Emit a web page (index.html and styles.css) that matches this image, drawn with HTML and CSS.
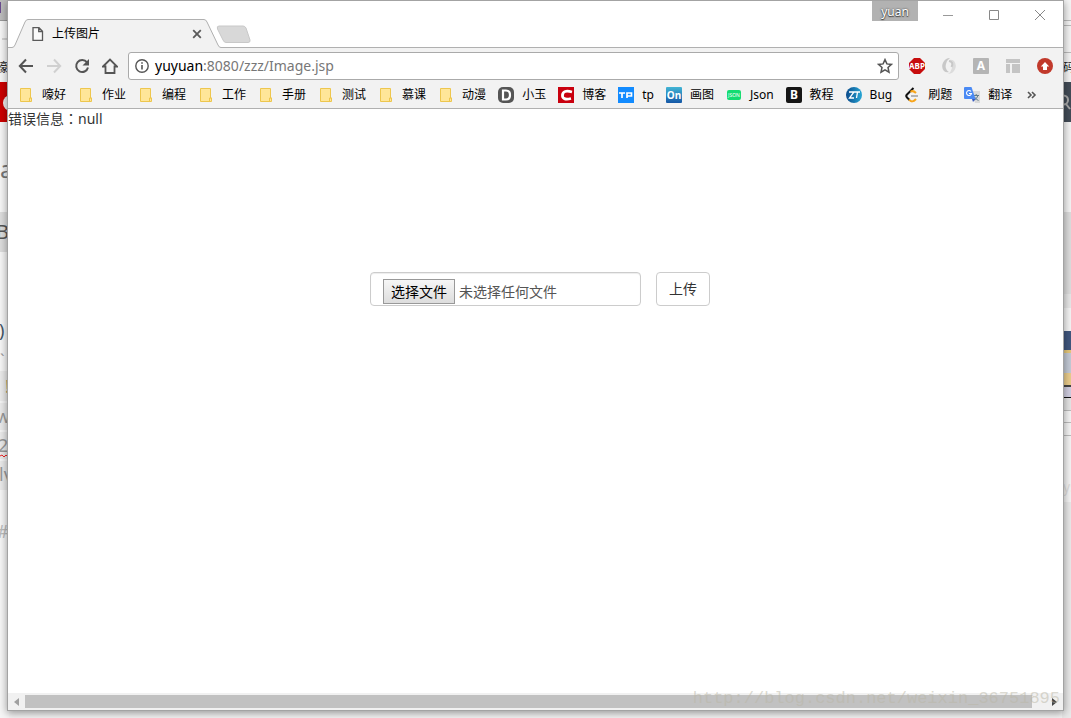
FILE: index.html
```html
<!DOCTYPE html>
<html lang="zh-CN">
<head>
<meta charset="utf-8">
<title>上传图片</title>
<link rel="stylesheet" href="styles.css">
</head>
<body>
<svg class="behind behind-left" width="9" height="718" aria-hidden="true">
  <rect width="9" height="718" fill="#f6f6f6"/>
  <rect width="9" height="20" fill="#bcbcbc"/>
  <rect y="2" width="1" height="11" fill="#6b4d8f"/>
  <rect y="20" width="9" height="1" fill="#999"/>
  <rect y="38" x="2" width="6" height="2" fill="#d4d4d4"/>
  <text x="-4" y="72" font-size="12" fill="#222">嚎</text>
  <rect y="82" width="9" height="40" fill="#c00"/>
  <circle cx="11" cy="103" r="8" fill="#eee"/>
  <text x="0" y="178" font-size="24" fill="#777">a</text>
  <rect y="212" width="9" height="40" fill="#ddd"/>
  <text x="-4" y="239" font-size="20" fill="#555">B</text>
  <text x="-1" y="337" font-size="18" fill="#456">)</text>
  <text x="0" y="366" font-size="16" fill="#999">`</text>
  <rect y="371" width="9" height="119" fill="#eaeaea"/>
  <text x="5" y="393" font-size="18" fill="#a89458">!</text>
  <path d="M0 402h9M0 431h9M0 460h9" stroke="#f5f5f5" stroke-width="2"/>
  <text x="-4" y="423" font-size="18" fill="#999">w</text>
  <text x="-2" y="452" font-size="18" fill="#999">2</text>
  <path d="M0 456l2-1 2 2 2-2 2 2" stroke="#e22" fill="none"/>
  <text x="-1" y="481" font-size="18" fill="#999">lv</text>
  <text x="-3" y="538" font-size="18" fill="#bbb">#</text>
</svg>
<svg class="behind behind-right" width="9" height="718" aria-hidden="true">
  <rect width="9" height="718" fill="#f4f4f4"/>
  <path d="M0 20.500h9M0 25.500h9M0 52.500h9" stroke="#bbb"/>
  <text x="1" y="72" font-size="12" fill="#222">码</text>
  <rect y="82" width="9" height="40" fill="#434c57"/>
  <circle cx="1.500" cy="100" r="4.500" fill="none" stroke="#aaa" stroke-width="2"/>
  <path d="M4 104l4 5" stroke="#aaa" stroke-width="2"/>
  <rect y="212" width="9" height="82" fill="#ddd"/>
  <rect y="294" width="9" height="14" fill="#e7e7e7"/>
  <rect y="331" width="9" height="19" fill="#41577e"/>
  <rect y="350" width="9" height="3" fill="#e5c87b"/>
  <rect y="353" width="9" height="20" fill="#c3cad5"/>
  <rect y="373" width="9" height="12" fill="#eacd8c"/>
  <rect y="385" width="9" height="2" fill="#444"/>
  <rect y="387" width="9" height="10" fill="#d0cee0"/>
  <rect y="397" width="9" height="1" fill="#111"/>
  <rect y="398" width="9" height="12" fill="#e5e5e5"/>
  <path d="M0 410.500h9M0 422.500h9M0 435.500h9" stroke="#bbb"/>
  <text x="1" y="492" font-size="14" fill="#ddd">ys</text>
  <rect y="502" width="9" height="216" fill="#e9e9e9"/>
</svg>

<div class="window">
  <header class="titlebar">
    <div class="tab">
      <svg class="tab-shape" width="213" height="29" viewBox="0 0 213 29" aria-hidden="true"><path d="M0 28.500H4Q6 28.500 7 26L17 3Q18 .5 20 .5H196Q198 .5 199 3L210 26Q211 28.500 213 28.500V29H0z" fill="#f2f2f2"/><path d="M0 28.500H4Q6 28.500 7 26L17 3Q18 .5 20 .5H196Q198 .5 199 3L210 26Q211 28.500 213 28.500" fill="none" stroke="#b0b0b0"/></svg>
      <svg class="tab-page" width="12" height="14" viewBox="0 0 12 14" aria-hidden="true"><path d="M1 .7H7L10.500 4.200V13.300H1zM6.700 1V4.500H10.500" fill="#fafafa" stroke="#5a5a5a" stroke-width="1.300"/></svg>
      <span class="tab-title">上传图片</span>
      <button class="tab-close" aria-label="关闭标签页"><svg width="10" height="10" viewBox="0 0 10 10"><path d="M1.200 1.200l7.600 7.600M8.800 1.200L1.200 8.800" stroke="#5a5a5a" stroke-width="1.800"/></svg></button>
    </div>
    <button class="new-tab" aria-label="新标签页"><svg width="36" height="19" viewBox="0 0 36 19"><path d="M3 1H27Q29 1 30 3L34 15Q34.500 17.500 32 17.500H10Q8 17.500 7 15L1.500 4Q.5 1 3 1z" fill="#d8d8d8" stroke="#c8c8c8"/></svg></button>
    <div class="window-controls">
      <button class="profile">yuan</button>
      <div class="control-group">
        <button aria-label="最小化"><svg width="12" height="12"><path d="M1 6.500h10" stroke="#999"/></svg></button>
        <button aria-label="最大化"><svg width="12" height="12"><path d="M1.500 1.500h9v9h-9z" fill="none" stroke="#888"/></svg></button>
        <button aria-label="关闭"><svg width="12" height="12"><path d="M1 1l10 10M11 1L1 11" stroke="#888"/></svg></button>
      </div>
    </div>
  </header>

  <div class="toolbar">
    <nav class="nav-buttons">
      <button aria-label="后退"><svg width="16" height="16"><path d="M15 8H2M8 1.500L1.800 8 8 14.500" fill="none" stroke="#555" stroke-width="2"/></svg></button>
      <button aria-label="前进"><svg width="16" height="16"><path d="M1 8h13M8 1.500L14.200 8 8 14.500" fill="none" stroke="#d0d0d0" stroke-width="2"/></svg></button>
      <button aria-label="重新加载"><svg width="16" height="16"><path d="M13 4.400A6 6 0 1 0 14 9.500" fill="none" stroke="#555" stroke-width="2"/><path d="M15 1v6.500H8.500z" fill="#555"/></svg></button>
      <button aria-label="主页"><svg width="16" height="16"><path d="M1 8.500L8 1.500l7 7h-2.500V15h-9V8.500z" fill="none" stroke="#555" stroke-width="1.800"/></svg></button>
    </nav>
    <div class="omnibox">
      <svg width="14" height="14" viewBox="0 0 14 14" aria-hidden="true"><circle cx="7" cy="7" r="6.200" fill="none" stroke="#555" stroke-width="1.400"/><path d="M7 6v4.500M7 3.200v1.600" stroke="#555" stroke-width="1.600"/></svg>
      <div class="url" role="textbox" aria-label="网址" tabindex="0"><span class="host">yuyuan</span>:8080/zzz/Image.jsp</div>
      <button aria-label="添加书签"><svg width="16" height="16" viewBox="0 0 16 16"><path d="M8 1.600l1.900 4.300 4.600.5-3.500 3.100 1 4.700L8 11.800l-4 2.400 1-4.700-3.500-3.100 4.600-.5z" fill="none" stroke="#555" stroke-width="1.500"/></svg></button>
    </div>
    <div class="extensions">
      <button aria-label="Adblock Plus"><svg width="16" height="16"><path d="M5 0h6l5 5v6l-5 5H5l-5-5V5z" fill="#c70d0d"/><text x="8" y="11" text-anchor="middle" font-size="8" font-weight="700" fill="#fff">ABP</text></svg></button>
      <button aria-label="扩展程序"><svg width="16" height="16"><path d="M9 0A8 8 0 0 0 3 13Q5 15 8 14Q3.500 11 5 6Q6 2 9 0z" fill="#c8c8c8"/><path d="M7 16A8 8 0 0 0 13 3Q11 1 8 2Q12.500 5 11 10Q10 14 7 16z" fill="#dcdcdc"/><path d="M8 3Q13 4 10.500 9" fill="none" stroke="#c8c8c8" stroke-width="2"/></svg></button>
      <button aria-label="扩展程序 A"><svg width="16" height="16"><rect width="16" height="16" rx="1" fill="#b5b5b5"/><text x="8" y="12" text-anchor="middle" font-size="12" font-weight="700" fill="#fff">A</text></svg></button>
      <button aria-label="布局工具"><svg width="16" height="16"><path d="M1 1h14v4H1zM1 6h4v9H1zM7 6h8v9H7z" fill="#c4c4c4"/></svg></button>
      <button aria-label="更新"><svg width="16" height="16"><circle cx="8" cy="8" r="8" fill="#c1392b"/><path d="M8 4l4.200 4.400H10V12H6V8.400H3.800z" fill="#fff"/></svg></button>
    </div>
  </div>

  <svg class="defs" width="0" height="0" aria-hidden="true">
    <symbol id="folder" viewBox="0 0 16 16"><path d="M2.500 1.500h10v9.500h1v3.500h-11z" fill="#ffe699" stroke="#edc64e"/><path d="M11.500 14.500v-3.500h2" fill="none" stroke="#edc64e"/></symbol>
    <linearGradient id="sky" x2="0" y2="1"><stop stop-color="#42b5d5"/><stop offset="1" stop-color="#1557a6"/></linearGradient>
    <linearGradient id="ocean" x2="1"><stop stop-color="#0b4b8c"/><stop offset="1" stop-color="#27a6d5"/></linearGradient>
  </svg>
  <nav class="bookmarks">
    <a href="#"><svg><use href="#folder"/></svg>嚎好</a>
    <a href="#"><svg><use href="#folder"/></svg>作业</a>
    <a href="#"><svg><use href="#folder"/></svg>编程</a>
    <a href="#"><svg><use href="#folder"/></svg>工作</a>
    <a href="#"><svg><use href="#folder"/></svg>手册</a>
    <a href="#"><svg><use href="#folder"/></svg>测试</a>
    <a href="#"><svg><use href="#folder"/></svg>慕课</a>
    <a href="#"><svg><use href="#folder"/></svg>动漫</a>
    <a href="#"><svg><rect width="16" height="16" rx="5" fill="#555"/><path d="M5 3.500h3q4 0 4 4.500t-4 4.500H5z" fill="none" stroke="#fff" stroke-width="2.200"/></svg>小玉</a>
    <a href="#"><svg><rect width="16" height="16" fill="#c9000e"/><path d="M14 5Q5 2.500 4.500 8T13 11.500" fill="none" stroke="#fff" stroke-width="2.800"/></svg>博客</a>
    <a href="#"><svg><rect width="16" height="16" fill="#128bff"/><path d="M1 6h6M4 6v5M9 11V6h4.500v3H9" fill="none" stroke="#fff" stroke-width="1.700"/></svg>tp</a>
    <a href="#"><svg><rect width="16" height="16" rx="1" fill="url(#sky)"/><text x="8" y="12" text-anchor="middle" font-size="10" font-weight="700" fill="#fff">On</text></svg>画图</a>
    <a href="#"><svg><rect x="1" y="3" width="14" height="10" rx="2" fill="#13dc72"/><text x="8" y="10" text-anchor="middle" font-size="5" fill="#fff">JSON</text></svg>Json</a>
    <a href="#"><svg><rect width="16" height="16" rx="2" fill="#151515"/><text x="8" y="12" text-anchor="middle" font-size="12" font-weight="700" fill="#fff">B</text></svg>教程</a>
    <a href="#"><svg><circle cx="8" cy="8" r="8" fill="url(#ocean)"/><path d="M3 5h5l-4.500 6H8M8.500 5H14M11.500 5l-1 6" fill="none" stroke="#fff" stroke-width="1.300"/></svg>Bug</a>
    <a href="#"><svg><path d="M9.500 1L3 7.500Q1.500 9 3 10.500L5.500 13" fill="none" stroke="#111" stroke-width="2"/><path d="M6.500 4.800Q9 3 12 6M5 12.500Q8 16.500 12 12" fill="none" stroke="#f8a51b" stroke-width="2"/><path d="M7 9h7" stroke="#b3b3b3" stroke-width="2"/></svg>刷题</a>
    <a href="#"><svg><path d="M7 4h9v12h-5z" fill="#d9d9d9"/><path d="M9.500 8.500h5.500M12.200 7v1.500M14 8.500q-1 3-3.500 4.500M10.500 10q1.500 2.500 4 3.500" fill="none" stroke="#607d8b"/><path d="M1 0h6.500L11.500 12H1Q0 12 0 11V1Q0 0 1 0z" fill="#4a8af4"/><path d="M8 12h3.500L9 15z" fill="#3457c0"/><path d="M7 4.500A2.500 2.500 0 1 0 7.500 6.500H5" fill="none" stroke="#fff" stroke-width="1.100"/></svg>翻译</a>
    <button class="more" aria-label="更多书签"><svg viewBox="0 0 16 16"><path d="M4 5l3 3-3 3M8 5l3 3-3 3" fill="none" stroke="#555" stroke-width="1.600"/></svg></button>
  </nav>

  <main class="page">
    <p class="message">错误信息<span class="colon" lang="zh-TW">：</span>null</p>
    <form class="upload">
      <div class="file-field">
        <input class="file-input" type="file" id="image">
        <label class="file-button" for="image">选择文件</label>
        <span class="file-name">未选择任何文件</span>
      </div>
      <button class="submit" type="submit">上传</button>
    </form>
  </main>

  <div class="scrollbar">
    <button aria-label="向左滚动"><svg width="5" height="8"><path d="M5 0v8L0 4z" fill="#a0a0a0"/></svg></button>
    <div class="thumb"></div>
    <button aria-label="向右滚动"><svg width="5" height="8"><path d="M0 0v8l5-4z" fill="#444"/></svg></button>
  </div>
</div>
<div class="watermark">http://blog.csdn.net/weixin_36751895</div>
</body>
</html>
```
FILE: styles.css
```css
* { box-sizing: border-box; }

body {
  margin: 0;
  height: 100vh;
  overflow: hidden;
  position: relative;
  display: flex;
  padding: 0 7px 7px;
  background: #f4f4f4;
  font: 12px/16px "Noto Sans", "Noto Sans CJK SC", sans-serif;
  color: #000;
}

button {
  border: 0;
  padding: 0;
  background: none;
  font: inherit;
  color: inherit;
  display: flex;
  align-items: center;
  justify-content: center;
}

svg { display: block; flex: none; }

.behind { position: absolute; top: 0; overflow: hidden; }
.behind-left { left: 0; }
.behind-right { right: 0; }

.window {
  position: relative;
  flex: 1;
  min-width: 0;
  display: flex;
  flex-direction: column;
  border: 1px solid #a3a3a3;
  background: #fff;
  box-shadow: 0 2px 8px rgba(0, 0, 0, 0.4);
}

.titlebar {
  display: flex;
  align-items: flex-end;
  height: 47px;
  border-bottom: 1px solid #b0b0b0;
}

.tab {
  position: relative;
  display: flex;
  align-items: center;
  width: 213px;
  height: 29px;
  margin-bottom: -1px;
  padding: 0 19px 0 24px;
}

.tab-shape { position: absolute; left: 0; top: 0; }
.tab-page, .tab-title, .tab-close { position: relative; }
.tab-title { flex: 1; margin-left: 8px; }

.new-tab { margin: 0 0 3px -5px; }

.window-controls {
  display: flex;
  align-self: flex-start;
  align-items: flex-start;
  gap: 7px;
  margin-left: auto;
}

.profile {
  width: 46px;
  height: 20px;
  padding-top: 2px;
  background: #b2b2b2;
  color: #fff;
  text-shadow: 0 0 2px #333, 0 1px 1px #444;
}

.control-group { display: flex; }
.control-group button { width: 46px; height: 28px; }

.toolbar {
  display: flex;
  align-items: center;
  height: 36px;
  padding: 0 10px;
  background: #f2f2f2;
}

.nav-buttons { display: flex; gap: 12px; margin-right: 10px; }

.omnibox {
  flex: 1;
  display: flex;
  align-items: center;
  height: 28px;
  padding: 0 5px 0 6px;
  border: 1px solid #aaa;
  border-radius: 3px;
  background: #fff;
}

.url {
  flex: 1;
  margin-left: 6px;
  font-size: 14px;
  line-height: 20px;
  color: #777;
}

.host { color: #000; }

.extensions { display: flex; gap: 16px; margin-left: 10px; }

.defs { position: absolute; }

.bookmarks {
  display: flex;
  align-items: center;
  gap: 12px;
  height: 25px;
  padding: 0 10px 3px;
  border-bottom: 1px solid #b0b0b0;
  background: #f2f2f2;
}

.bookmarks a {
  display: flex;
  align-items: center;
  gap: 8px;
  color: #000;
  text-decoration: none;
  white-space: nowrap;
}

.bookmarks svg { width: 16px; height: 16px; }

.page {
  flex: 1;
  min-height: 0;
  font-size: 14px;
  line-height: 20px;
  color: #333;
}

.message { margin: 0; }
.colon { font-family: "Noto Sans CJK TC", sans-serif; line-height: 1; }

.upload {
  display: flex;
  justify-content: center;
  gap: 15px;
  padding: 143px 0 0 9px;
}

.file-field {
  position: relative;
  display: flex;
  align-items: center;
  width: 271px;
  height: 34px;
  padding: 5px 12px 0;
  border: 1px solid #ccc;
  border-radius: 4px;
  box-shadow: inset 0 1px 1px rgba(0, 0, 0, 0.075);
  color: #555;
}

.file-input {
  position: absolute;
  width: 1px;
  height: 1px;
  opacity: 0;
}

.file-button {
  padding: 1px 7px;
  border: 1px solid #999;
  background: linear-gradient(#f6f6f6, #ddd);
  color: #000;
  line-height: 21px;
}

.file-name { margin-left: 4px; }

.submit {
  width: 54px;
  height: 34px;
  border: 1px solid #ccc;
  border-radius: 4px;
  background: #fff;
  color: #333;
}

.scrollbar {
  display: flex;
  height: 17px;
  background: #f1f1f1;
}

.scrollbar button { width: 17px; }
.thumb { flex: 1; margin: 2px 14px 2px 0; background: #c1c1c1; }

.watermark {
  position: absolute;
  right: 11px;
  bottom: 9px;
  font: 17px/20px "Liberation Mono", monospace;
  color: rgba(185, 182, 165, 0.5);
  pointer-events: none;
}
```
